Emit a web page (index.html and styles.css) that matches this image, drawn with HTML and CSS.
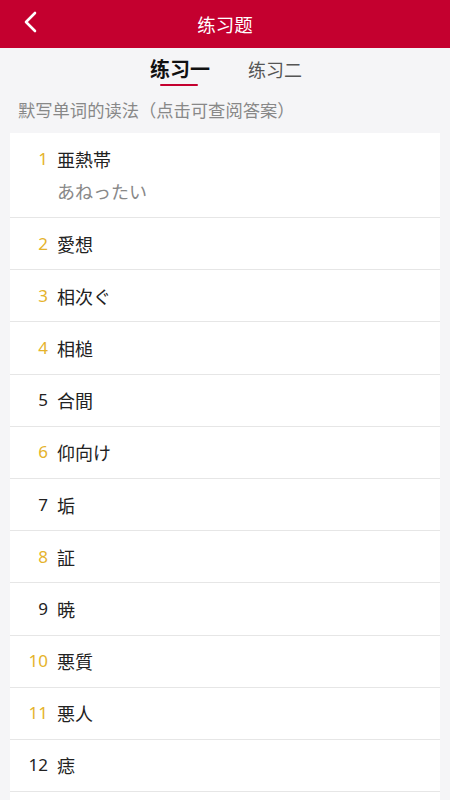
FILE: index.html
```html
<!DOCTYPE html>
<html lang="zh">
<head>
  <meta charset="UTF-8">
  <meta name="viewport" content="width=device-width, initial-scale=1.0">
  <title>练习题</title>
  <link rel="stylesheet" href="styles.css">
</head>
<body>
  <div class="header">
    <span class="back">
      <svg width="16" height="22" viewBox="0 0 16 22"><path d="M12 2 L3 11 L12 20" fill="none" stroke="#fff" stroke-width="2.6" stroke-linecap="round" stroke-linejoin="round"/></svg>
    </span>
    <h1>练习题</h1>
  </div>

  <div class="tabs">
    <div class="tab active">练习一</div>
    <div class="tab">练习二</div>
  </div>

  <div class="hint">默写单词的读法（点击可查阅答案）</div>

  <div class="list">
    <div class="item open">
      <div class="word"><span class="num gold">1</span><span class="text">亜熱帯</span></div>
      <div class="reading">あねったい</div>
    </div>
    <div class="item"><div class="word"><span class="num gold">2</span><span class="text">愛想</span></div></div>
    <div class="item"><div class="word"><span class="num gold">3</span><span class="text">相次ぐ</span></div></div>
    <div class="item"><div class="word"><span class="num gold">4</span><span class="text">相槌</span></div></div>
    <div class="item"><div class="word"><span class="num">5</span><span class="text">合間</span></div></div>
    <div class="item"><div class="word"><span class="num gold">6</span><span class="text">仰向け</span></div></div>
    <div class="item"><div class="word"><span class="num">7</span><span class="text">垢</span></div></div>
    <div class="item"><div class="word"><span class="num gold">8</span><span class="text">証</span></div></div>
    <div class="item"><div class="word"><span class="num">9</span><span class="text">暁</span></div></div>
    <div class="item"><div class="word"><span class="num gold">10</span><span class="text">悪質</span></div></div>
    <div class="item"><div class="word"><span class="num gold">11</span><span class="text">悪人</span></div></div>
    <div class="item"><div class="word"><span class="num">12</span><span class="text">痣</span></div></div>
  </div>
</body>
</html>
```

FILE: styles.css
```css
body {
  margin: 0;
  background-color: #f5f5f7;
  font-family: "Noto Sans CJK JP", "Noto Sans CJK SC", "Noto Sans", sans-serif;
  color: #222;
  overflow: hidden;
}

.header {
  position: relative;
  height: 48px;
  background-color: #c4002f;
  display: flex;
  align-items: center;
  justify-content: center;
}

.header h1 {
  margin: 0;
  font-size: 18.5px;
  font-weight: 400;
  color: #fff;
  font-family: "Noto Sans CJK SC", sans-serif;
}

.back {
  position: absolute;
  left: 23px;
  top: 11px;
  display: flex;
}

.tabs {
  display: flex;
  justify-content: center;
  gap: 36px;
  height: 42px;
  font-family: "Noto Sans CJK SC", sans-serif;
}

.tab {
  position: relative;
  font-size: 18px;
  color: #555;
  line-height: 42px;
  padding-left: 2px;
}

.tab.active {
  font-size: 20px;
  font-weight: 700;
  color: #111;
}

.tab.active::after {
  content: "";
  position: absolute;
  left: 12px;
  right: 12px;
  bottom: 4px;
  height: 2px;
  background-color: #c4002f;
  border-radius: 1px;
}

.hint {
  padding: 7px 18px 0;
  height: 36px;
  font-size: 17.3px;
  color: #888;
  font-family: "Noto Sans CJK SC", sans-serif;
  line-height: 26px;
}

.list {
  margin: 0 10px;
  padding-bottom: 40px;
  background-color: #fff;
}

.item {
  border-bottom: 1px solid #e6e6e6;
  height: 51.2px;
  display: flex;
  flex-direction: column;
  justify-content: center;
}

.item.open {
  height: 84px;
}

.word {
  display: flex;
  align-items: center;
  font-size: 18px;
  line-height: 26px;
}

.num {
  width: 38px;
  text-align: right;
  margin-right: 9px;
  color: #222;
  font-family: "Noto Sans", sans-serif;
  font-size: 17px;
}

.num.gold {
  color: #e5b32b;
}

.reading {
  margin-top: 6px;
  padding-left: 47px;
  font-size: 18px;
  color: #888;
  line-height: 26px;
}
```
